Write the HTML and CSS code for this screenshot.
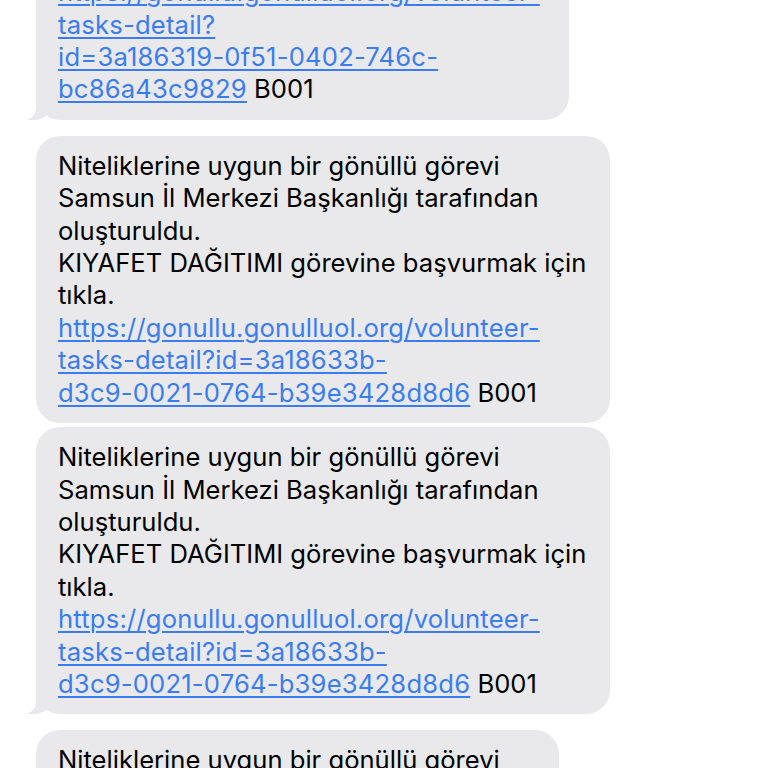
FILE: index.html
```html
<!DOCTYPE html>
<html lang="tr">
<head>
<meta charset="utf-8">
<link rel="stylesheet" href="styles.css">
</head>
<body>
<div class="thread">
  <div class="bubble tail b1">
    <p>Niteliklerine uygun bir gönüllü görevi<br>Samsun İl Merkezi Başkanlığı tarafından<br>oluşturuldu.<br><a href="#">https://gonullu.gonulluol.org/volunteer-<br>tasks-detail?<br>id=3a186319-0f51-0402-746c-<br>bc86a43c9829</a> B001</p>
  </div>
  <div class="group">
    <div class="bubble">
      <p>Niteliklerine uygun bir gönüllü görevi<br>Samsun İl Merkezi Başkanlığı tarafından<br>oluşturuldu.<br>KIYAFET DAĞITIMI görevine başvurmak için<br>tıkla.<br><a href="#">https://gonullu.gonulluol.org/volunteer-<br>tasks-detail?id=3a18633b-<br>d3c9-0021-0764-b39e3428d8d6</a> B001</p>
    </div>
    <div class="bubble tail">
      <p>Niteliklerine uygun bir gönüllü görevi<br>Samsun İl Merkezi Başkanlığı tarafından<br>oluşturuldu.<br>KIYAFET DAĞITIMI görevine başvurmak için<br>tıkla.<br><a href="#">https://gonullu.gonulluol.org/volunteer-<br>tasks-detail?id=3a18633b-<br>d3c9-0021-0764-b39e3428d8d6</a> B001</p>
    </div>
  </div>
  <div class="bubble b4">
    <p>Niteliklerine uygun bir gönüllü görevi<br>Samsun İl Merkezi Başkanlığı tarafından<br>oluşturuldu.</p>
  </div>
</div>
</body>
</html>
```

FILE: styles.css
```css
html, body {
  margin: 0;
  padding: 0;
  background: #ffffff;
  overflow: hidden;
  height: 768px;
}
.thread {
  display: flex;
  flex-direction: column;
  align-items: flex-start;
  gap: 16px;
  margin-top: -135px;
  padding-left: 36px;
}
.group {
  display: flex;
  flex-direction: column;
  align-items: flex-start;
  gap: 4px;
}
.bubble {
  position: relative;
  background: #e9e9eb;
  border-radius: 24px;
  padding: 14px 24px 14px 22px;
}
.bubble p {
  margin: 0;
  font-family: Inter, "Liberation Sans", sans-serif;
  font-size: 25.6px;
  line-height: 32.4px;
  color: #000;
  white-space: nowrap;
}
.bubble a {
  color: #3a7df0;
  text-decoration: underline;
  text-underline-offset: 3px;
  text-decoration-thickness: 1.5px;
  letter-spacing: 0.2px;
}
.b1 {
  padding-right: 29px;
}
.b4 {
  padding-right: 20px;
}
.tail::before {
  content: "";
  position: absolute;
  bottom: 0;
  left: -10px;
  width: 26px;
  height: 24px;
  background: #e9e9eb;
  border-bottom-right-radius: 18px 16px;
}
.tail::after {
  content: "";
  position: absolute;
  bottom: 0;
  left: -30px;
  width: 30px;
  height: 24px;
  background: #ffffff;
  border-bottom-right-radius: 12px;
}
```
